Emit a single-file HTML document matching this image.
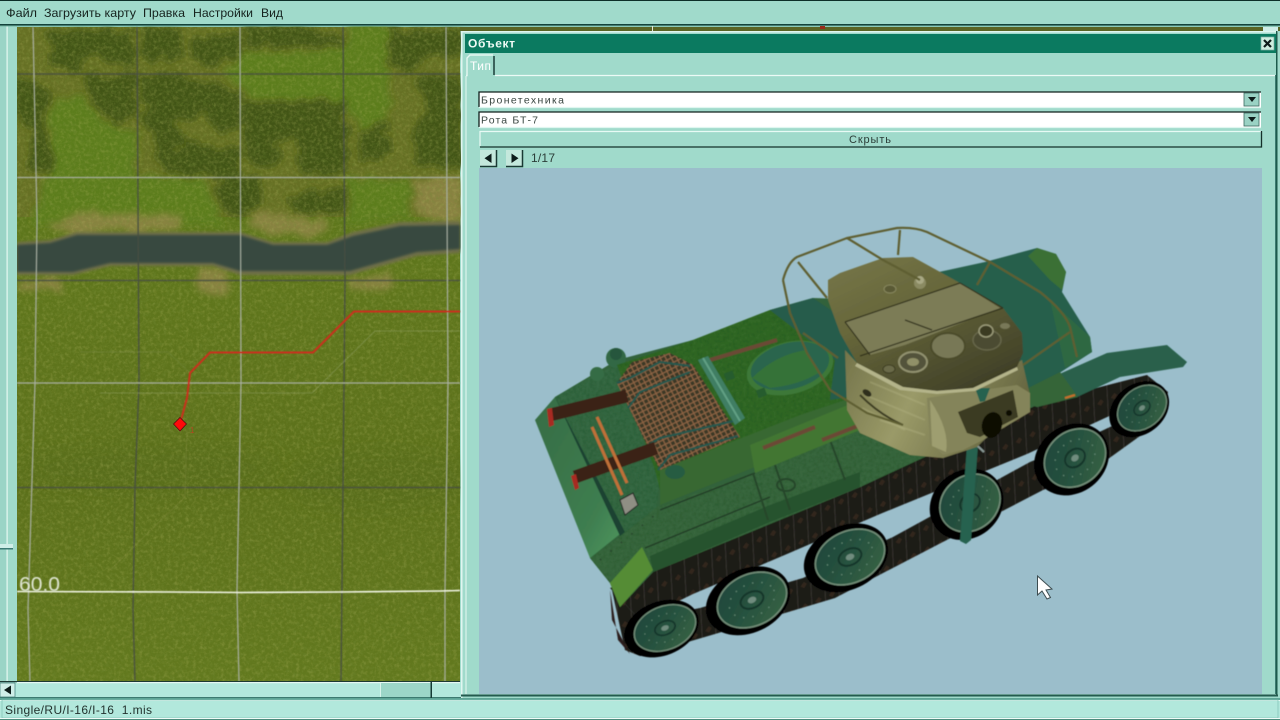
<!DOCTYPE html>
<html><head><meta charset="utf-8"><title>Объект</title>
<style>
html,body{margin:0;padding:0;width:1280px;height:720px;overflow:hidden;background:#a0dacb}
svg{display:block}
text{font-family:"Liberation Sans","DejaVu Sans",sans-serif}
</style></head><body>
<svg width="1280" height="720" viewBox="0 0 1280 720" xmlns="http://www.w3.org/2000/svg">
<defs>
<filter id="org" x="-5%" y="-5%" width="110%" height="110%"><feTurbulence type="fractalNoise" baseFrequency=".07" numOctaves="3" seed="5" result="t"/><feDisplacementMap in="SourceGraphic" in2="t" scale="18" xChannelSelector="R" yChannelSelector="G"/><feGaussianBlur stdDeviation="3.4"/></filter>
<filter id="b1" x="-20%" y="-20%" width="140%" height="140%"><feGaussianBlur stdDeviation="1.2"/></filter>
<filter id="b5" x="-20%" y="-20%" width="140%" height="140%"><feGaussianBlur stdDeviation="9"/></filter>
<filter id="mapd" x="0" y="0" width="100%" height="100%"><feTurbulence type="fractalNoise" baseFrequency=".3" numOctaves="3" seed="7"/><feColorMatrix values="0 0 0 0 .18  0 0 0 0 .26  0 0 0 0 .04  2.4 0 0 0 -1.05"/></filter>
<filter id="mapy" x="0" y="0" width="100%" height="100%"><feTurbulence type="fractalNoise" baseFrequency=".28" numOctaves="3" seed="19"/><feColorMatrix values="0 0 0 0 .5  0 0 0 0 .5  0 0 0 0 .14  2.4 0 0 0 -1.1"/></filter>
<filter id="grain" x="0" y="0" width="100%" height="100%"><feTurbulence type="fractalNoise" baseFrequency=".3" numOctaves="2" seed="4" result="n"/><feColorMatrix in="n" values="0 0 0 0 0  0 0 0 0 .05  0 0 0 0 0  .55 0 0 0 -.2" result="d"/><feComposite in="d" in2="SourceAlpha" operator="in" result="c"/><feMerge><feMergeNode in="SourceGraphic"/><feMergeNode in="c"/></feMerge></filter>
<filter id="s" x="-5%" y="-5%" width="110%" height="110%"><feGaussianBlur stdDeviation=".4"/></filter>
<filter id="t" x="-5%" y="-20%" width="110%" height="140%"><feGaussianBlur stdDeviation=".3"/></filter>
<pattern id="mesh" width="7" height="7" patternUnits="userSpaceOnUse" patternTransform="rotate(18)"><rect width="7" height="7" fill="#3a3826"/><path d="M0 0L7 7M7 0L0 7" stroke="#8e6444" stroke-width="1.200"/></pattern>
<pattern id="track" width="15" height="20" patternUnits="userSpaceOnUse" patternTransform="rotate(-25) skewX(-22)"><rect width="15" height="20" fill="#1c1a17"/><path d="M0 0V20" stroke="#44403a" stroke-width="1.300"/><path d="M4 10l4-3 3 3-3 3z" fill="#33281c"/></pattern>
<linearGradient id="turtop" x1="0" y1="0" x2=".7" y2="1"><stop offset="0" stop-color="#77774a"/><stop offset=".45" stop-color="#66663a"/><stop offset="1" stop-color="#414128"/></linearGradient>
<linearGradient id="turside" x1="0" y1="0" x2="1" y2=".3"><stop offset="0" stop-color="#74744a"/><stop offset=".45" stop-color="#9a9a68"/><stop offset="1" stop-color="#686842"/></linearGradient>
<linearGradient id="wh" x1="0" y1="0" x2="1" y2="1"><stop offset="0" stop-color="#1d463b"/><stop offset=".5" stop-color="#27523f"/><stop offset="1" stop-color="#3a6545"/></linearGradient>
<linearGradient id="rear" x1="0" y1="0" x2="1" y2="1"><stop offset="0" stop-color="#366c44"/><stop offset=".7" stop-color="#3f7e50"/><stop offset="1" stop-color="#509a60"/></linearGradient>
<linearGradient id="mapbg" x1="0" y1="0" x2="0" y2="1"><stop offset="0" stop-color="#58771c"/><stop offset=".4" stop-color="#5f761c"/><stop offset=".7" stop-color="#5c701b"/><stop offset="1" stop-color="#62791e"/></linearGradient>
<g id="wheel"><ellipse cx="-4" cy="-1" rx="44" ry="32" fill="#040404"/><ellipse rx="37" ry="26.500" fill="#74907a"/><ellipse rx="35.500" ry="25" fill="url(#wh)"/><ellipse rx="12" ry="8" fill="none" stroke="#153529" stroke-width="2"/><ellipse rx="4.500" ry="3" fill="#6f8c7e"/><ellipse rx="24" ry="16" fill="none" stroke="#648a74" stroke-width="1.300" stroke-dasharray="1.300 8"/></g>
</defs>

<!-- MAP -->
<g id="map">
<rect x="17" y="27" width="443" height="655" fill="url(#mapbg)"/>
<rect x="17" y="27" width="443" height="190" fill="#667024"/>
<g filter="url(#org)" fill="#5b7d1a">
<path d="M52 100L85 96L107 125L137 130L137 177L205 178L222 225L30 225L48 170Z"/>
<path d="M222 72L245 50L345 50L347 20L390 20L390 105L382 125L362 130L345 112L330 100L245 100L240 85Z"/>
<path d="M347 178L410 178L410 222L347 222Z"/>
</g>
<g filter="url(#org)" fill="#425512">
<path d="M48 30L133 30L137 62L108 65L95 50L72 72L50 62Z"/>
<path d="M80 76L137 74L137 118L115 128L100 108Z"/>
<path d="M140 76L180 74L218 86L240 98L240 128L218 134L205 112L172 122L188 142L160 152L143 118Z"/>
<path d="M143 28L178 28L182 56L143 62Z"/><path d="M190 40L240 28L242 54L215 64L195 60Z"/>
<path d="M243 26L300 26L340 36L345 47L243 45Z"/>
<path d="M243 103L342 100L347 130L345 174L300 172L295 138L270 142L286 152L270 170L244 152Z"/>
<path d="M390 30L462 30L462 56L425 56L412 70L390 64Z"/>
<path d="M413 78L462 76L462 168L418 168L413 130L428 110Z"/>
<path d="M15 76L47 90L45 130L54 168L28 175L33 130L15 122Z"/>
<path d="M216 178L262 178L264 207L235 218L220 207Z"/><path d="M288 198L347 188L342 214L293 214Z"/>
<path d="M150 154L190 144L240 148L240 177L170 175Z"/>
<path d="M358 134L385 123L392 150L365 162Z"/>
</g>
<g filter="url(#org)" fill="#8d8444" opacity=".9">
<path d="M55 222L90 212L150 216L180 214L180 230L55 234Z"/>
<path d="M245 222L258 212L330 220L325 236L270 236Z"/>
<path d="M412 180L462 180L462 218L420 218Z"/>
<path d="M17 280L62 280L62 290L17 290Z"/><path d="M198 268L228 268L230 294L198 294Z"/><path d="M350 280L390 270L390 290L350 290Z"/>
</g>
<ellipse cx="150" cy="468" rx="130" ry="22" fill="#51671a" filter="url(#b5)" opacity=".3"/>
<ellipse cx="380" cy="480" rx="90" ry="30" fill="#51671a" filter="url(#b5)" opacity=".3"/>
<rect x="17" y="27" width="443" height="655" filter="url(#mapd)" opacity=".38"/>
<rect x="17" y="27" width="443" height="655" filter="url(#mapy)" opacity=".25"/>
<path d="M17 242L50 240L77 232L240 232L273 242L327 242L353 232L400 222L460 221V253L417 256L350 275H240L213 266H110L73 275H17Z" fill="#6f6f4a" filter="url(#b1)"/>
<path d="M17 245L50 243L77 235L240 235L273 245L327 245L353 236L400 226L460 225V249L417 252L350 271H240L213 263H110L73 272H17Z" fill="#39493f" filter="url(#b1)"/>
<g fill="none" filter="url(#s)">
<g stroke="#474f42" stroke-width="1.300" opacity=".95">
<path d="M17 74H460M17 280.500H460M17 487.500H460"/>
<path d="M137 27L139 383L135 487L133 610L135 682M343 27L345 280L343 487L341 682"/>
</g>
<g stroke="#a8afa2" stroke-width="1.200">
<path d="M17 177.500H460M17 383H460"/>
<path d="M33 27L37 220L35 383L28 610L30 682M240 27L241 383L237 590L239 682M446 27L448 383L445 590L445 682"/>
</g>
<path d="M17 591.500L170 592L240 592.500L340 592L440 591L460 590.500" stroke="#f2f5e6" stroke-width="1.600"/>
<path d="M80 352H168L189 372" stroke="#8a9a60" stroke-width=".7" opacity=".35"/>
<path d="M100 393H312L375 331H460" stroke="#a8b488" stroke-width=".8" opacity=".45"/>
<path d="M187 430L185 497L110 570" stroke="#9a9a58" stroke-width=".7" opacity=".35"/>
<path d="M181 420L187 398L190 373L210 352.500H313L354 311.500H460" stroke="#c9301a" stroke-width="2"/>
</g>
<path d="M180 417.500L186.500 424L180 431L173.500 424Z" fill="#ff0a0a" stroke="#5a1010" stroke-width=".8"/>
<text x="190" y="433" font-size="8" fill="#b04a20">1</text>
<text x="19" y="591" font-size="20" fill="#dfe5d2" textLength="41" lengthAdjust="spacingAndGlyphs" filter="url(#s)">60.0</text>
</g>

<!-- left strip -->
<rect x="0" y="26" width="17" height="656" fill="#a0dacb"/>
<rect x="0" y="26" width="7" height="656" fill="#9ad4c6"/>
<rect x="6.500" y="26" width="1.200" height="656" fill="#e6f8f2"/>
<rect x="0" y="544" width="13" height="5" fill="#cfeee8"/>
<rect x="0" y="548" width="13" height="1.500" fill="#3c7a74"/>

<!-- menu -->
<rect x="0" y="0" width="1280" height="25" fill="#a0dacb"/>
<rect x="0" y="0" width="1280" height="1" fill="#0c2e28"/>
<rect x="0" y="24" width="1280" height="1.500" fill="#12423a"/>
<rect x="0" y="25.500" width="1280" height="1" fill="#76b6a4"/>
<g font-size="12" fill="#14221f" filter="url(#t)">
<text x="6" y="17" textLength="31" lengthAdjust="spacingAndGlyphs">Файл</text>
<text x="44" y="17" textLength="92" lengthAdjust="spacingAndGlyphs">Загрузить карту</text>
<text x="143" y="17" textLength="42" lengthAdjust="spacingAndGlyphs">Правка</text>
<text x="193" y="17" textLength="60" lengthAdjust="spacingAndGlyphs">Настройки</text>
<text x="261" y="17" textLength="22" lengthAdjust="spacingAndGlyphs">Вид</text>
</g>

<!-- map scrollbar -->
<rect x="0" y="682" width="461" height="16" fill="#b2e8dc"/>
<rect x="0" y="681" width="460" height="1.200" fill="#1c3a34"/>
<rect x="17" y="682" width="443" height="1.200" fill="#e6f8f2"/>
<rect x="0" y="697" width="461" height="1.200" fill="#3c7a70"/>
<rect x="0" y="683" width="15" height="14" fill="#cfeee8" stroke="#3c7a74" stroke-width=".7"/>
<path d="M4 690L11 685.500V694.500Z" fill="#0e1c1a"/>
<rect x="380" y="683" width="51" height="14" fill="#9cd6c8"/>
<rect x="380" y="683" width="1" height="14" fill="#d8f4ec"/>
<rect x="430.500" y="682" width="1.500" height="16" fill="#143a34"/>

<!-- status bar -->
<rect x="0" y="698" width="1280" height="22" fill="#b2e8dc"/>
<rect x="0" y="698" width="1280" height="2" fill="#5ea596"/>
<rect x="0" y="700" width="1280" height="1" fill="#e8fbf5"/>
<rect x="2" y="700" width="1276" height="18" fill="none" stroke="#7fc0b2" stroke-width=".7"/>
<rect x="0" y="718" width="1280" height="1" fill="#f0fcf8"/>
<rect x="0" y="719" width="1280" height="1" fill="#4c8c7c"/>
<text x="5" y="714" font-size="12" fill="#22332e" textLength="147" lengthAdjust="spacing" filter="url(#t)">Single/RU/I-16/I-16&#160;&#160;1.mis</text>

<!-- WINDOW -->
<rect x="460" y="27" width="820" height="4" fill="#5a6424"/>
<rect x="652" y="26" width="1" height="6" fill="#e8e8d8"/>
<rect x="1263" y="27" width="15" height="5" fill="#cfeee8"/>
<rect x="820" y="26" width="5" height="3" fill="#9a2a1a"/>
<rect x="461" y="31" width="817" height="667" fill="#a0dacb"/>
<rect x="461" y="31" width="817" height="1.500" fill="#e0f6f0"/>
<rect x="461" y="31" width="1.500" height="667" fill="#e0f6f0"/>
<rect x="1276" y="31" width="1.500" height="665" fill="#1d5a4c"/>
<rect x="461" y="695" width="817" height="1.500" fill="#1d5a4c"/>
<rect x="465" y="34" width="811" height="19" fill="#0b7a60"/>
<text x="468" y="47.500" font-size="12" font-weight="bold" fill="#eefaf5" textLength="47" lengthAdjust="spacing" filter="url(#t)">Объект</text>
<rect x="1261" y="37" width="13" height="13" fill="#cfeee0" stroke="#7fb0a4" stroke-width=".7"/>
<path d="M1264 40L1271 47M1271 40L1264 47" stroke="#0f1c1a" stroke-width="2.200"/>

<!-- tab -->
<path d="M466 75.500H467V58L470 55H493" fill="none" stroke="#e6f8f2" stroke-width="1.400"/>
<path d="M494 56V75" stroke="#10302c" stroke-width="1.400"/>
<path d="M495 75.500H1275" stroke="#ecfaf6" stroke-width="1.200"/>
<path d="M466 76V694" stroke="#e6f8f2" stroke-width="1"/>
<path d="M1275.500 75V694" stroke="#3c7a70" stroke-width="1"/>
<text x="470" y="70" font-size="12" fill="#ffffff" textLength="21" lengthAdjust="spacing" filter="url(#t)">Тип</text>

<!-- combos -->
<g>
<rect x="479" y="91.500" width="782" height="16" fill="#ffffff"/>
<path d="M479 107V92H1261" fill="none" stroke="#10201c" stroke-width="1.300"/>
<path d="M479 107.500H1261" stroke="#e0f6f0" stroke-width="1.200"/>
<rect x="1244" y="93" width="15" height="13" fill="#9ad2c4" stroke="#3c6a60" stroke-width=".8"/>
<path d="M1248 97H1256L1252 102Z" fill="#0e1c1a"/>
<rect x="479" y="111.500" width="782" height="16" fill="#ffffff"/>
<path d="M479 127V112H1261" fill="none" stroke="#10201c" stroke-width="1.300"/>
<path d="M479 127.500H1261" stroke="#e0f6f0" stroke-width="1.200"/>
<rect x="1244" y="113" width="15" height="13" fill="#9ad2c4" stroke="#3c6a60" stroke-width=".8"/>
<path d="M1248 117H1256L1252 122Z" fill="#0e1c1a"/>
</g>
<g font-size="10.500" fill="#3a4642" filter="url(#t)">
<text x="481" y="103.500" textLength="83" lengthAdjust="spacing">Бронетехника</text>
<text x="481" y="123.500" textLength="57" lengthAdjust="spacing">Рота БТ-7</text>
</g>
<!-- button -->
<rect x="480" y="131" width="781" height="16" fill="#a0dacb"/>
<path d="M480 146V131.500H1261" fill="none" stroke="#e8faf5" stroke-width="1.200"/>
<path d="M480 147H1261.500V131" fill="none" stroke="#14302a" stroke-width="1.300"/>
<text x="849" y="143" font-size="11" fill="#2c3e38" textLength="42" lengthAdjust="spacing" filter="url(#t)">Скрыть</text>
<!-- nav -->
<g>
<rect x="480" y="150" width="17" height="17" fill="#c4e8dc"/>
<path d="M480 166.500H496.500V150" fill="none" stroke="#1a3a34" stroke-width="1.500"/>
<path d="M491.500 153.500V163L484.500 158.300Z" fill="#0e1c1a"/>
<rect x="506" y="150" width="17" height="17" fill="#c4e8dc"/>
<path d="M506 166.500H522.500V150" fill="none" stroke="#1a3a34" stroke-width="1.500"/>
<path d="M511.500 153.500V163L518.500 158.300Z" fill="#0e1c1a"/>
</g>
<text x="531" y="162" font-size="12" fill="#2c3e38" textLength="24" lengthAdjust="spacing" filter="url(#t)">1/17</text>

<!-- VIEW -->
<rect x="479" y="168" width="783" height="526" fill="#9bbecb"/>
<rect x="461" y="694.500" width="817" height="1" fill="#2a5a50"/>

<!-- TANK -->
<g id="tank" filter="url(#s)">
<!-- hull behind turret -->
<path d="M925 275L985 262L1037 248L1056 254L1066 272L1062 292L1090 337L1092 352L1030 392L985 330Z" fill="#285f4c"/>
<path d="M1028 256L1037 248L1056 254L1066 272L1062 290L1050 280Z" fill="#3a7036"/>
<path d="M1050 300L1090 337L1092 352L1065 368Z" fill="#2d6842"/>
<!-- tracks -->
<path d="M610 588L655 570L860 487L1030 405L1147 375L1168 392L1165 410L1118 412L1027 454L880 514L787 554L693 594L640 620Z" fill="url(#track)"/>
<path d="M612 590L625 650L640 656L715 634L835 598L1043 490L1090 472L1140 436L1168 398L1160 396L1125 420L1065 448L1030 462L893 537L803 578L700 608L640 620Z" fill="url(#track)"/>
<path d="M610 590L618 640L630 654L612 620Z" fill="#2a1c1a"/>
<!-- wheels -->
<use href="#wheel" transform="translate(1142 408) rotate(-38) scale(.74 .78)"/>
<use href="#wheel" transform="translate(1075 458) rotate(-38) scale(.9 1.050)"/>
<use href="#wheel" transform="translate(970 503) rotate(-38) scale(.88 1.050)"/>
<use href="#wheel" transform="translate(850 557) rotate(-25) scale(1)"/>
<use href="#wheel" transform="translate(752 600) rotate(-25) scale(1)"/>
<use href="#wheel" transform="translate(665 628) rotate(-22) scale(.88 .84)"/>
<!-- hull underlay -->
<path d="M555 397L617 360L693 340L770 310L813 298L875 300L900 390L1000 390L1030 392L1037 405L860 487L653 572L620 607L610 583L590 558Z" fill="#32623a"/>
<!-- hull side -->
<path d="M590 558L625 533L657 507L753 473L860 430L1000 390L1030 392L1037 405L860 487L653 572L620 607L610 583Z" fill="#38663e" filter="url(#grain)"/>
<path d="M653 572L770 522L860 487L860 472L770 505L650 556Z" fill="#28522e"/>
<path d="M645 548L770 497M660 510L755 473" stroke="#243a26" stroke-width="1.300"/>
<path d="M753 473L768 520M775 465L790 510M830 440L845 480" stroke="#28462c" stroke-width="2"/>
<ellipse cx="786" cy="485" rx="9" ry="6" fill="none" stroke="#28462c" stroke-width="2"/>
<path d="M600 560L655 515" stroke="#26402a" stroke-width="1.500" stroke-dasharray="1.500 12"/>
<path d="M610 583L642 547L653 570L620 607Z" fill="#548c34"/>
<!-- rear plate -->
<path d="M535 420L555 397L625 530L590 558Z" fill="url(#rear)"/>
<path d="M555 397L566 404L625 532L620 536Z" fill="#1a4230"/>
<!-- deck rear part -->
<path d="M555 397L600 372L617 365L660 470L657 507L625 532Z" fill="#366842" filter="url(#grain)"/>
<circle cx="616" cy="358" r="10" fill="#306844"/><circle cx="616" cy="354" r="6" fill="#28563c"/>
<circle cx="597" cy="374" r="7" fill="#366c44"/>
<!-- deck -->
<path d="M617 365L693 340L770 310L813 298L860 340L865 425L770 448L660 490L655 470Z" fill="#326826" filter="url(#grain)"/>
<path d="M770 310L813 298L860 330L860 395L830 400L835 360Z" fill="#285c4c"/>
<path d="M660 470L800 415L860 395L865 425L760 465L660 505Z" fill="#386832"/>
<path d="M755 473L860 430L860 400L750 445Z" fill="#437632"/>
<ellipse cx="790" cy="368" rx="44" ry="26" transform="rotate(-14 790 368)" fill="#3c7838"/>
<ellipse cx="790" cy="366" rx="40" ry="23" transform="rotate(-14 790 366)" fill="#2b654e"/>
<path d="M752 378Q775 355 806 350L820 372Q800 385 770 388Z" fill="#367238"/>
<rect x="725" y="372" width="9" height="8" fill="#285c2e" transform="rotate(-20 729 376)"/>
<rect x="757" y="389" width="9" height="8" fill="#285c2e" transform="rotate(-20 761 393)"/>
<path d="M710 360L777 340M763 448L815 427M822 440L860 425" stroke="#6a4834" stroke-width="4"/>
<!-- mesh -->
<path d="M617 383L632 362L670 353L693 365L740 437L660 470L643 437Z" fill="url(#mesh)"/>
<path d="M617 383L630 378L660 362L690 366M628 408L640 392L690 372M640 450L660 438L738 420M658 470L670 455L738 436" fill="none" stroke="#25584e" stroke-width="2.200"/>
<path d="M698 360L708 356L745 418L735 425Z" fill="#3f7e64"/>
<path d="M703 358L740 421" stroke="#62a084" stroke-width="2"/>
<ellipse cx="675" cy="472" rx="10" ry="7" fill="#285c42"/>
<!-- pipes -->
<path d="M550 415L627 396" stroke="#3b2218" stroke-width="13"/>
<path d="M547 409L549 427L554 425L552 408Z" fill="#a82a20"/>
<path d="M575 477L656 448" stroke="#3b2218" stroke-width="13"/>
<path d="M571 476L575 490L579 488L576 474Z" fill="#a82a20"/>
<path d="M592 427L622 495M597 417L627 483" stroke="#c07038" stroke-width="3"/>
<path d="M620 500L633 493L638 505L625 515Z" fill="#8f8f84" stroke="#222" stroke-width="1"/>
<!-- front mudguard -->
<path d="M1030 387L1107 353L1167 345L1187 362L1183 367L1120 377L1077 397L1037 407L1018 400Z" fill="#29614c"/>
<path d="M1030 387L1060 372L1078 397L1037 407L1018 400Z" fill="#366538"/>
<path d="M1065 398l10-3" stroke="#c8702c" stroke-width="2"/>
<!-- gun -->
<path d="M967 445L978 445L971 540L966 544L960 541Z" fill="#286250"/>
<path d="M968 437L984 452" stroke="#8a9a96" stroke-width="2"/>
<!-- turret side -->
<path d="M845 350L847 410L860 433L910 455L943 458L977 447L1030 395L1022 360L973 388L900 385L857 363Z" fill="url(#turside)"/>
<g stroke="#bcbc8c" stroke-width="1.200" opacity=".5" filter="url(#s)"><path d="M870 382L925 405M865 395L925 420M880 420L925 435M862 408L905 430"/></g>
<path d="M860 395Q880 415 903 425" stroke="#3c3c24" stroke-width="2" fill="none"/>
<ellipse cx="867" cy="393" rx="5" ry="3" fill="#2e2e1a" transform="rotate(35 867 393)"/>
<!-- mantlet -->
<path d="M927 398L1017 385L1030 393L1030 412L983 440L963 450L943 455L930 443Z" fill="#84845a"/>
<path d="M930 400Q950 430 946 452L932 446Z" fill="#9e9e70"/>
<path d="M958 412L1013 390L1018 417L980 437L967 433Z" fill="#3b3a20"/>
<ellipse cx="992" cy="425" rx="10" ry="13" transform="rotate(15 992 425)" fill="#0b0b06"/>
<circle cx="1009" cy="413" r="3" fill="#0b0b06"/>
<path d="M975 388L990 388L985 401L980 402Z" fill="#286250"/>
<!-- turret top -->
<path d="M828 280L840 273L883 258L913 257L960 283L1003 308L1022 333L1023 353L1017 367L973 388L937 391L903 387L857 363L840 333L828 300Z" fill="url(#turtop)"/>
<path d="M857 363L903 387L937 391L973 388L1017 367L1018 370L975 391L937 394L900 390L855 366Z" fill="#b4b48a"/>
<path d="M845 322L960 283L1000 308L905 345L870 355Z" fill="#7c7c56"/>
<path d="M845 322L960 283M960 283L1003 308M1003 308L860 356M845 322L870 355M905 320L932 330" stroke="#33331c" stroke-width="1.200" fill="none"/>
<circle cx="920" cy="283" r="6" fill="#8a8a62"/><circle cx="920" cy="280" r="4" fill="#a8a884"/>
<ellipse cx="890" cy="289" rx="6" ry="4" fill="#5a5a36" stroke="#88885f"/>
<ellipse cx="948" cy="346" rx="17" ry="13" fill="#787856" stroke="#4c4c2c" stroke-width="2"/>
<ellipse cx="913" cy="362" rx="14" ry="10" fill="#52523a" stroke="#929270" stroke-width="2"/>
<ellipse cx="913" cy="362" rx="6" ry="4" fill="#909068"/>
<ellipse cx="987" cy="340" rx="14" ry="10" fill="#4c4c32" stroke="#66664a" stroke-width="1.500"/>
<ellipse cx="986" cy="331" rx="7" ry="6" fill="#3a3a22" stroke="#9a9a78" stroke-width="1.500"/>
<ellipse cx="889" cy="369" rx="6" ry="4" fill="#6a6a48" stroke="#3c3c22"/>
<ellipse cx="1005" cy="326" rx="5" ry="3" fill="#787858"/>
<!-- rails -->
<g fill="none" stroke="#5e5e30" stroke-width="2.200">
<path d="M783 280Q788 262 797 257L847 238L897 228Q915 227 927 232L990 262L1040 292Q1065 312 1070 327L1077 357"/>
<path d="M783 280L790 313L807 353L830 390L867 413L903 425"/>
<path d="M798 262L827 298M847 238L883 260M900 230L898 255M990 262L977 285M1070 332L1023 365M803 333L838 358M883 260L920 280"/>
</g>
</g>

<!-- cursor -->
<path d="M1037.500 576L1037.500 595L1042 591L1047 599L1050.500 597.500L1046 590L1052 589Z" fill="#ffffff" stroke="#3c4c50" stroke-width="1"/>
</svg>
</body></html>
